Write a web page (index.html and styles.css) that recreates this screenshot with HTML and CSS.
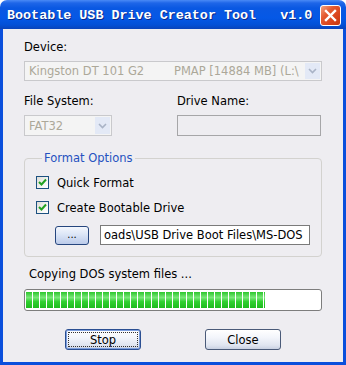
FILE: index.html
```html
<!DOCTYPE html>
<html>
<head>
<meta charset="utf-8">
<link rel="stylesheet" href="styles.css">
</head>
<body>
<div class="window">
  <div class="titlebar">
    <span class="title">Bootable USB Drive Creator Tool   v1.0</span>
    <span class="closebtn"><svg width="13" height="13" viewBox="0 0 13 13"><path d="M2 2 L11 11 M11 2 L2 11" stroke="#fff" stroke-width="2.4" stroke-linecap="square"/></svg></span>
  </div>
  <div class="client">
    <div class="label lbl-device">Device:</div>
    <div class="combo combo-device">
      <span class="combo-text"><span class="dev-name">Kingston DT 101 G2</span><span class="dev-info">PMAP [14884 MB] (L:\</span></span>
      <span class="arrow"><svg width="9" height="6" viewBox="0 0 9 6"><path d="M1 1 L4.5 4.5 L8 1" fill="none" stroke="#a9b3c6" stroke-width="1.6"/></svg></span>
    </div>
    <div class="row2">
      <div class="col-fs">
        <div class="label">File System:</div>
        <div class="combo combo-fs">
          <span class="combo-text">FAT32</span>
          <span class="arrow"><svg width="9" height="6" viewBox="0 0 9 6"><path d="M1 1 L4.5 4.5 L8 1" fill="none" stroke="#a9b3c6" stroke-width="1.6"/></svg></span>
        </div>
      </div>
      <div class="col-dn">
        <div class="label">Drive Name:</div>
        <div class="textbox-disabled"></div>
      </div>
    </div>
    <fieldset class="group">
      <legend class="legend">Format Options</legend>
      <div class="check-row">
        <span class="checkbox"><svg width="9" height="9" viewBox="0 0 9 9"><path d="M1 4 L3.5 6.5 L8 1.5" fill="none" stroke="#21a121" stroke-width="2"/></svg></span>
        <span class="check-label">Quick Format</span>
      </div>
      <div class="check-row">
        <span class="checkbox"><svg width="9" height="9" viewBox="0 0 9 9"><path d="M1 4 L3.5 6.5 L8 1.5" fill="none" stroke="#21a121" stroke-width="2"/></svg></span>
        <span class="check-label">Create Bootable Drive</span>
      </div>
      <div class="path-row">
        <button class="browse">...</button>
        <div class="pathbox"><span class="path-text">oads\USB Drive Boot Files\MS-DOS</span></div>
      </div>
    </fieldset>
    <div class="label lbl-status">Copying DOS system files ...</div>
    <div class="progress"><div class="progress-fill" style="width: 239px"></div></div>
    <div class="buttons">
      <button class="btn btn-default"><span class="focus">Stop</span></button>
      <button class="btn">Close</button>
    </div>
  </div>
</div>
</body>
</html>
```
FILE: styles.css
```css
html, body {
  margin: 0;
  padding: 0;
  background: #ffffff;
}
.window {
  width: 346px;
  height: 365px;
  display: flex;
  flex-direction: column;
  font-family: "DejaVu Sans", sans-serif;
  font-size: 11.5px;
  color: #000;
}
.titlebar {
  height: 29px;
  box-sizing: border-box;
  border-radius: 7px 7px 0 0;
  background: linear-gradient(#4a8af6 0px, #1e66e8 3px, #0a58e2 8px, #0558e6 18px, #0350d6 25px, #0a43b9 29px);
  display: flex;
  align-items: center;
  justify-content: space-between;
  padding: 0 5px 0 7px;
}
.title {
  font-family: "Liberation Mono", monospace;
  font-weight: bold;
  font-size: 13.4px;
  color: #fff;
  white-space: pre;
  text-shadow: 1px 1px 0 #0b2a8a;
  margin-top: 1px;
}
.closebtn {
  width: 21px;
  height: 21px;
  box-sizing: border-box;
  border: 1px solid #fff;
  border-radius: 3px;
  background: linear-gradient(135deg, #f4a482 0%, #e45a30 35%, #d8431c 70%, #c4380f 100%);
  display: flex;
  align-items: center;
  justify-content: center;
  margin-top: 2px;
}
.client {
  flex: 1;
  background: #eeedf1;
  border: 3px solid #0a4fdc;
  border-top: none;
  padding: 0 21px;
  display: flex;
  flex-direction: column;
}
.label {
  line-height: 13px;
  height: 13px;
  white-space: nowrap;
}
.lbl-device { margin-top: 12px; }
.combo {
  box-sizing: border-box;
  border: 1px solid #c9c9cc;
  background: #f4f4f4;
  display: flex;
  align-items: center;
  color: #aca899;
  padding-left: 4px;
  overflow: hidden;
}
.combo-device {
  margin-top: 7px;
  height: 20px;
  width: 298px;
}
.combo-text {
  flex: 1;
  white-space: nowrap;
  overflow: hidden;
  display: flex;
}
.dev-name { width: 145px; flex: none; }
.dev-info { flex: none; }
.arrow {
  width: 15px;
  align-self: stretch;
  margin: 1px;
  background: #e3e9f6;
  display: flex;
  align-items: center;
  justify-content: center;
  flex: none;
}
.row2 {
  display: flex;
  margin-top: 14px;
  justify-content: space-between;
}
.col-fs { width: 88px; }
.col-dn { width: 144px; margin-right: 1px; }
.combo-fs {
  margin-top: 7px;
  height: 21px;
  width: 88px;
}
.textbox-disabled {
  margin-top: 7px;
  height: 21px;
  box-sizing: border-box;
  border: 1px solid #a6a6a8;
  background: #eeedf1;
}
.group {
  margin: 16px 0 0 0;
  padding: 4px 0 8px 11px;
  border: 1px solid #d3d2cf;
  border-radius: 4px;
  width: 298px;
  box-sizing: border-box;
  height: 105px;
}
.legend {
  color: #2552c0;
  padding: 0 2px;
  margin-left: 6px;
  line-height: 13px;
}
.check-row {
  display: flex;
  align-items: center;
  height: 13px;
  margin-top: 7px;
  margin-bottom: 5px;
  white-space: nowrap;
}
.check-row + .check-row { margin-top: 12px; }
.checkbox {
  width: 13px;
  height: 13px;
  box-sizing: border-box;
  border: 1px solid #1c5180;
  background: linear-gradient(135deg, #dcdcd7 0%, #f5f5f3 60%, #ffffff 100%);
  display: flex;
  align-items: center;
  justify-content: center;
  margin-right: 8px;
  flex: none;
}
.path-row {
  display: flex;
  align-items: center;
  margin-top: 11px;
  padding-left: 19px;
}
.browse {
  width: 34px;
  height: 19px;
  box-sizing: border-box;
  border: 1px solid #26467e;
  border-radius: 3px;
  background: linear-gradient(#f4f7fd 0%, #dbe5f6 45%, #bccbea 100%);
  font-family: "DejaVu Sans", sans-serif;
  font-size: 10px;
  padding: 0;
  line-height: 12px;
  color: #000;
  flex: none;
}
.pathbox {
  margin-left: 11px;
  width: 210px;
  height: 20px;
  box-sizing: border-box;
  border: 1px solid #7a7a7a;
  background: #fff;
  overflow: hidden;
  display: flex;
  align-items: center;
  padding-left: 3px;
  flex: none;
}
.path-text { white-space: nowrap; }
.lbl-status { margin-top: 11px; padding-left: 5px; }
.progress {
  margin-top: 8px;
  height: 22px;
  width: 298px;
  box-sizing: border-box;
  border: 1px solid #7d7d7d;
  border-radius: 3px;
  background: #fff;
  padding: 2px 1px;
}
.progress-fill {
  height: 100%;
  background:
    repeating-linear-gradient(90deg, transparent 0px, transparent 6px, #ffffff 6px, #ffffff 7px),
    linear-gradient(#2cc62c 0%, #7ae87a 35%, #2fd02f 60%, #1dbb1d 100%);
}
.buttons {
  display: flex;
  margin-top: 18px;
  padding-left: 41px;
  gap: 64px;
}
.btn {
  width: 76px;
  height: 21px;
  box-sizing: border-box;
  border: 1px solid #4a5a78;
  border-radius: 3px;
  background: linear-gradient(#ffffff 0%, #f3f5fb 40%, #e0e5f0 80%, #c9d1e2 100%);
  font-family: "DejaVu Sans", sans-serif;
  font-size: 11.5px;
  color: #000;
  padding: 0;
}
.btn-default {
  border-color: #2b4f92;
  box-shadow: inset 0 0 0 1px #7d9fdf;
  padding: 2px;
}
.focus {
  display: flex;
  align-items: center;
  justify-content: center;
  height: 100%;
  box-sizing: border-box;
  border: 1px dotted #333;
}
```
